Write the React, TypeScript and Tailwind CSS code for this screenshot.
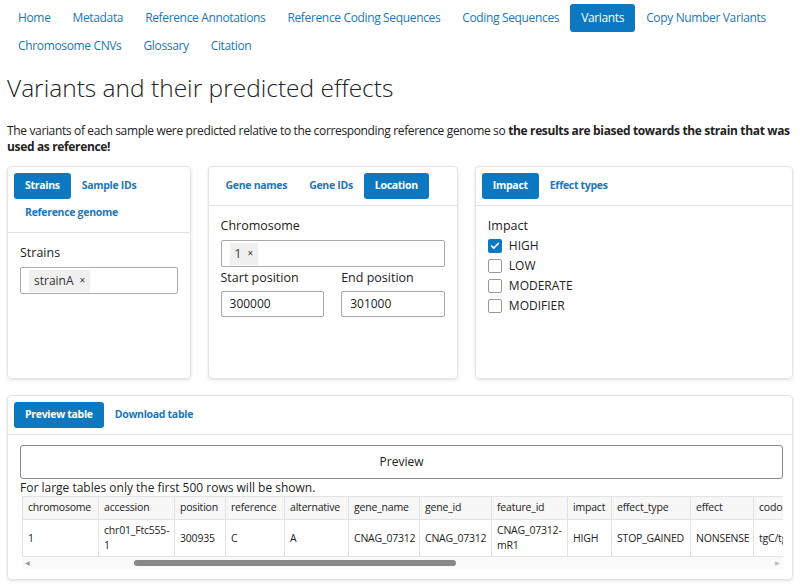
import { Check } from "lucide-react"

const navRow1 = ["Home", "Metadata", "Reference Annotations", "Reference Coding Sequences", "Coding Sequences", "Variants", "Copy Number Variants"]
const navRow2 = ["Chromosome CNVs", "Glossary", "Citation"]

function NavItem({ label, active }: { label: string; active?: boolean }) {
  return (
    <a
      className={
        active
          ? "px-[11px] h-[28px] flex items-center whitespace-nowrap rounded-[3px] bg-[#0b78c1] text-white"
          : "px-[11px] h-[28px] flex items-center whitespace-nowrap text-[#1c77b8]"
      }
    >
      {label}
    </a>
  )
}

function Tab({ label, active }: { label: string; active?: boolean }) {
  return (
    <span
      className={
        active
          ? "h-[26px] px-[11px] flex items-center whitespace-nowrap rounded-[3px] bg-[#0b78c1] text-white font-bold text-[10.5px] tracking-[-0.3px]"
          : "h-[26px] px-[11px] flex items-center whitespace-nowrap text-[#1c77b8] font-bold text-[10.5px] tracking-[-0.3px]"
      }
    >
      {label}
    </span>
  )
}

function Chip({ label }: { label: string }) {
  return (
    <span className="bg-[#f0f0f0] px-[5px] h-[22px] flex items-center gap-[6px] text-[12px] text-[#333]">
      {label}
      <span className="text-[10px]">×</span>
    </span>
  )
}

function CheckRow({ label, checked }: { label: string; checked?: boolean }) {
  return (
    <div className="flex items-center gap-[7px] h-[20px]">
      {checked ? (
        <span className="w-[14px] h-[14px] rounded-[2px] bg-[#0b78c1] flex items-center justify-center">
          <Check className="w-[10px] h-[10px] text-white" strokeWidth={4} />
        </span>
      ) : (
        <span className="w-[14px] h-[14px] rounded-[2px] border border-[#999] bg-white" />
      )}
      <span className="text-[12px] text-[#222]">{label}</span>
    </div>
  )
}

const cols = ["chromosome", "accession", "position", "reference", "alternative", "gene_name", "gene_id", "feature_id", "impact", "effect_type", "effect", "codon"]
const widths = [76, 76, 51, 59, 64, 71, 72, 76, 44, 79, 63, 60]
const row = ["1", "chr01_Ftc555-1", "300935", "C", "A", "CNAG_07312", "CNAG_07312", "CNAG_07312-mR1", "HIGH", "STOP_GAINED", "NONSENSE", "tgC/tgA"]

export default function App() {
  return (
    <div className="w-[800px] h-[587px] overflow-hidden bg-white font-['Open_Sans',sans-serif] text-[#222]">
      {/* Nav */}
      <nav className="pl-[7px] pt-[4px] text-[12px] tracking-[-0.35px]">
        <div className="flex">
          {navRow1.map((n) => (
            <NavItem key={n} label={n} active={n === "Variants"} />
          ))}
        </div>
        <div className="flex">
          {navRow2.map((n) => (
            <NavItem key={n} label={n} />
          ))}
        </div>
      </nav>

      <h1 className="px-[7px] mt-[11px] text-[24.5px] font-light leading-[34px] text-[#222]">
        Variants and their predicted effects
      </h1>

      <p className="px-[7px] mt-[18px] text-[12px] leading-[16px] tracking-[-0.35px] text-[#222]">
        The variants of each sample were predicted relative to the corresponding reference genome so{" "}
        <b>the results are biased towards the strain that was used as reference!</b>
      </p>

      {/* Filter cards */}
      <div className="flex gap-[17px] px-[7px] mt-[11px]">
        <div className="w-[184px] h-[213px] rounded-[4px] border border-[#e4e4e4] shadow-[0_1px_3px_rgba(0,0,0,0.12)]">
          <div className="px-[6px] pt-[6px] pb-[6px] border-b border-[#e2e2e2]">
            <div className="flex">
              <Tab label="Strains" active />
              <Tab label="Sample IDs" />
            </div>
            <div className="flex mt-[1px]">
              <Tab label="Reference genome" />
            </div>
          </div>
          <div className="px-[12px] pt-[10px]">
            <div className="text-[12.5px] leading-[20px]">Strains</div>
            <div className="mt-[4px] h-[27px] border border-[#aaa] rounded-[2px] flex items-center px-[8px]">
              <Chip label="strainA" />
            </div>
          </div>
        </div>

        <div className="w-[251px] h-[213px] rounded-[4px] border border-[#e4e4e4] shadow-[0_1px_3px_rgba(0,0,0,0.12)]">
          <div className="px-[6px] pt-[6px] pb-[6px] border-b border-[#e2e2e2] flex">
            <Tab label="Gene names" />
            <Tab label="Gene IDs" />
            <Tab label="Location" active />
          </div>
          <div className="px-[12px] pt-[10px]">
            <div className="text-[12.5px] leading-[20px]">Chromosome</div>
            <div className="mt-[4px] h-[27px] border border-[#aaa] rounded-[2px] flex items-center px-[8px]">
              <Chip label="1" />
            </div>
            <div className="grid grid-cols-2 gap-[17px] mt-[1px]">
              <div>
                <div className="text-[12.5px] leading-[20px]">Start position</div>
                <div className="mt-[3px] h-[26px] border border-[#aaa] rounded-[2px] flex items-center px-[8px] text-[12px]">300000</div>
              </div>
              <div>
                <div className="text-[12.5px] leading-[20px]">End position</div>
                <div className="mt-[3px] h-[26px] border border-[#aaa] rounded-[2px] flex items-center px-[8px] text-[12px]">301000</div>
              </div>
            </div>
          </div>
        </div>

        <div className="w-[319px] h-[213px] rounded-[4px] border border-[#e4e4e4] shadow-[0_1px_3px_rgba(0,0,0,0.12)]">
          <div className="px-[6px] pt-[6px] pb-[6px] border-b border-[#e2e2e2] flex">
            <Tab label="Impact" active />
            <Tab label="Effect types" />
          </div>
          <div className="px-[12px] pt-[10px]">
            <div className="text-[12.5px] leading-[20px]">Impact</div>
            <CheckRow label="HIGH" checked />
            <CheckRow label="LOW" />
            <CheckRow label="MODERATE" />
            <CheckRow label="MODIFIER" />
          </div>
        </div>
      </div>

      {/* Table card */}
      <div className="mx-[7px] mt-[16px] h-[185px] rounded-[4px] border border-[#e4e4e4] shadow-[0_1px_3px_rgba(0,0,0,0.12)]">
        <div className="px-[6px] pt-[6px] pb-[6px] border-b border-[#e2e2e2] flex">
          <Tab label="Preview table" active />
          <Tab label="Download table" />
        </div>
        <div className="px-[12px] pt-[10px]">
          <div className="w-[763px] h-[34px] border border-[#888] rounded-[3px] flex items-center justify-center text-[12px]">
            Preview
          </div>
          <div className="text-[12px] leading-[16px] mt-[1px]">For large tables only the first 500 rows will be shown.</div>
          <div className="ml-[2px] w-[761px] overflow-hidden">
            <table className="border-collapse text-[10.5px] tracking-[-0.2px] table-fixed" style={{ width: widths.reduce((a, b) => a + b, 0) }}>
              <colgroup>
                {widths.map((w, i) => (
                  <col key={i} style={{ width: w }} />
                ))}
              </colgroup>
              <thead>
                <tr className="bg-[#f7f7f7] h-[23px]">
                  {cols.map((c) => (
                    <th key={c} className="border border-[#e2e2e2] text-left font-normal px-[5px] whitespace-nowrap overflow-hidden">
                      {c}
                    </th>
                  ))}
                </tr>
              </thead>
              <tbody>
                <tr className="h-[37px]">
                  {row.map((c, i) => (
                    <td key={i} className="border border-[#e2e2e2] px-[5px] leading-[15px] whitespace-nowrap overflow-hidden">
                      {c === "chr01_Ftc555-1" ? (
                        <>chr01_Ftc555-<br />1</>
                      ) : c === "CNAG_07312-mR1" ? (
                        <>CNAG_07312-<br />mR1</>
                      ) : (
                        c
                      )}
                    </td>
                  ))}
                </tr>
              </tbody>
            </table>
          </div>
          {/* scrollbar */}
          <div className="ml-[2px] w-[761px] h-[12px] bg-[#fafafa] flex items-center relative">
            <span className="absolute left-[3px] text-[6px] text-[#999]">◀</span>
            <div className="ml-[112px] w-[322px] h-[6px] rounded-full bg-[#888]" />
            <span className="absolute right-[3px] text-[6px] text-[#bbb]">▶</span>
          </div>
        </div>
      </div>
    </div>
  )
}
